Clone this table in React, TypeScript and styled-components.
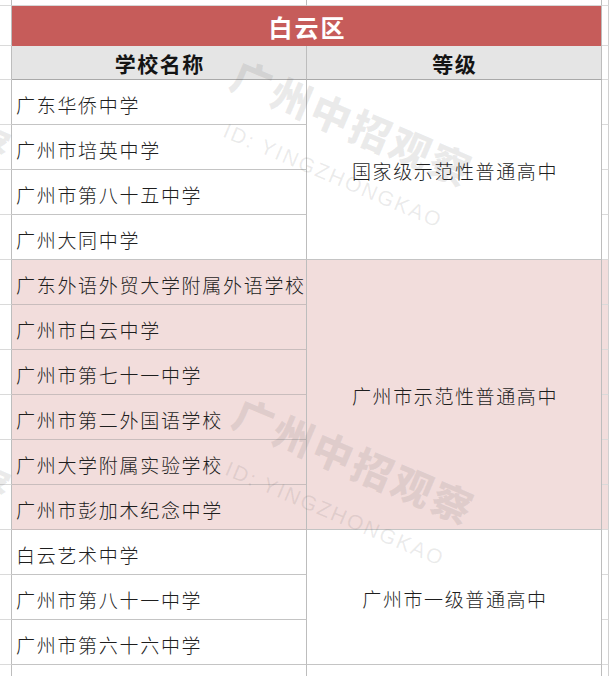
import React from 'react';
import styled, { createGlobalStyle } from 'styled-components';

const GlobalStyle = createGlobalStyle`
  html, body {
    margin: 0;
    padding: 0;
    background: #ffffff;
  }
  * {
    box-sizing: border-box;
  }
`;

const CJK = `"Noto Sans CJK SC", "Noto Sans", sans-serif`;

type Tone = 'plain' | 'pink';

const Page = styled.div`
  position: relative;
  width: 609px;
  height: 676px;
  overflow: hidden;
  font-family: ${CJK};
`;

const Sheet = styled.div`
  display: grid;
  grid-template-columns: 12px 295px 295px 1fr;
  grid-template-rows: 6px 40px 34px;
  grid-auto-rows: 45px;
`;

const Gutter = styled.div<{ $tone?: Tone; $right?: boolean }>`
  background: ${p => (p.$tone === 'pink' ? '#f2dddc' : '#ffffff')};
  border-bottom: 1px solid #dadada;
  border-right: 1px solid ${p => (p.$right ? '#d0d0d0' : '#bdbdbd')};
`;

const Blank = styled.div`
  border-right: 1px solid #bdbdbd;
  border-bottom: 1px solid #d6d6d6;
`;

const TitleCell = styled.div`
  grid-column: span 2;
  display: flex;
  align-items: center;
  justify-content: center;
  background: #c65c5a;
  border-right: 1px solid #bdbdbd;
  color: #ffffff;
  font-size: 24px;
  font-weight: 700;
  letter-spacing: 2px;
  padding-left: 2px;
`;

const HeadCell = styled.div`
  display: flex;
  align-items: center;
  justify-content: center;
  background: #e5e5e5;
  border-right: 1px solid #bdbdbd;
  border-bottom: 1px solid #a9a9a9;
  color: #141414;
  font-size: 21px;
  font-weight: 700;
  letter-spacing: 1.5px;
  padding-left: 1.5px;
`;

const NameCell = styled.div<{ $tone: Tone }>`
  display: flex;
  align-items: center;
  padding: 4px 0 0 4px;
  background: ${p => (p.$tone === 'pink' ? '#f2dddc' : '#ffffff')};
  border-right: 1px solid #bdbdbd;
  border-bottom: 1px solid ${p => (p.$tone === 'pink' ? '#c9bdbd' : '#c4c4c4')};
  color: #1e1e1e;
  font-size: 19px;
  font-weight: 300;
  letter-spacing: 1.7px;
  white-space: nowrap;
`;

const GradeCell = styled.div<{ $tone: Tone; $span: number }>`
  grid-row: span ${p => p.$span};
  display: flex;
  align-items: center;
  justify-content: center;
  padding: 2px 0 0 2px;
  background: ${p => (p.$tone === 'pink' ? '#f2dddc' : '#ffffff')};
  border-right: 1px solid #bdbdbd;
  border-bottom: 1px solid #c4c4c4;
  color: #1e1e1e;
  font-size: 19px;
  font-weight: 300;
  letter-spacing: 1.6px;
  white-space: nowrap;
`;

const Overlay = styled.div`
  position: absolute;
  inset: 0;
  pointer-events: none;
`;

const MarkTitle = styled.div<{ $x: number; $y: number }>`
  position: absolute;
  left: ${p => p.$x}px;
  top: ${p => p.$y}px;
  transform: translate(-50%, -50%) rotate(23deg);
  white-space: nowrap;
  font-family: ${CJK};
  font-size: 40px;
  font-weight: 900;
  letter-spacing: 3px;
  color: rgba(90, 90, 90, 0.12);
`;

const MarkId = styled.div<{ $x: number; $y: number }>`
  position: absolute;
  left: ${p => p.$x}px;
  top: ${p => p.$y}px;
  transform: translate(-50%, -50%) rotate(23deg);
  white-space: nowrap;
  font-family: "Liberation Sans", Arial, sans-serif;
  font-size: 21px;
  letter-spacing: 2px;
  color: rgba(90, 90, 90, 0.12);
`;

interface Group {
  grade: string;
  tone: Tone;
  names: string[];
}

const groups: Group[] = [
  {
    grade: '国家级示范性普通高中',
    tone: 'plain',
    names: ['广东华侨中学', '广州市培英中学', '广州市第八十五中学', '广州大同中学'],
  },
  {
    grade: '广州市示范性普通高中',
    tone: 'pink',
    names: [
      '广东外语外贸大学附属外语学校',
      '广州市白云中学',
      '广州市第七十一中学',
      '广州市第二外国语学校',
      '广州大学附属实验学校',
      '广州市彭加木纪念中学',
    ],
  },
  {
    grade: '广州市一级普通高中',
    tone: 'plain',
    names: ['白云艺术中学', '广州市第八十一中学', '广州市第六十六中学'],
  },
];

// watermark tiles; the two on the left only peek in at the edge
const marks = [
  { x: 353, y: 122 },
  { x: 355, y: 460 },
  { x: -108, y: 100 },
  { x: -108, y: 440 },
];

function App() {
  return (
    <Page>
      <GlobalStyle />
      <Sheet>
        <Gutter />
        <Blank />
        <Blank />
        <Gutter $right />

        <Gutter />
        <TitleCell>白云区</TitleCell>
        <Gutter $right />

        <Gutter />
        <HeadCell>学校名称</HeadCell>
        <HeadCell>等级</HeadCell>
        <Gutter $right />

        {groups.map(group =>
          group.names.map((name, i) => (
            <React.Fragment key={name}>
              <Gutter />
              <NameCell $tone={group.tone}>{name}</NameCell>
              {i === 0 && (
                <GradeCell $tone={group.tone} $span={group.names.length}>
                  {group.grade}
                </GradeCell>
              )}
              <Gutter $right $tone={group.tone} />
            </React.Fragment>
          ))
        )}

        <Gutter />
        <Blank />
        <Blank />
        <Gutter $right />
      </Sheet>
      <Overlay>
        {marks.map(m => (
          <React.Fragment key={`${m.x}-${m.y}`}>
            <MarkTitle $x={m.x} $y={m.y}>广州中招观察</MarkTitle>
            <MarkId $x={m.x - 20} $y={m.y + 54}>ID: YINGZHONGKAO</MarkId>
          </React.Fragment>
        ))}
      </Overlay>
    </Page>
  );
}

export default App;
